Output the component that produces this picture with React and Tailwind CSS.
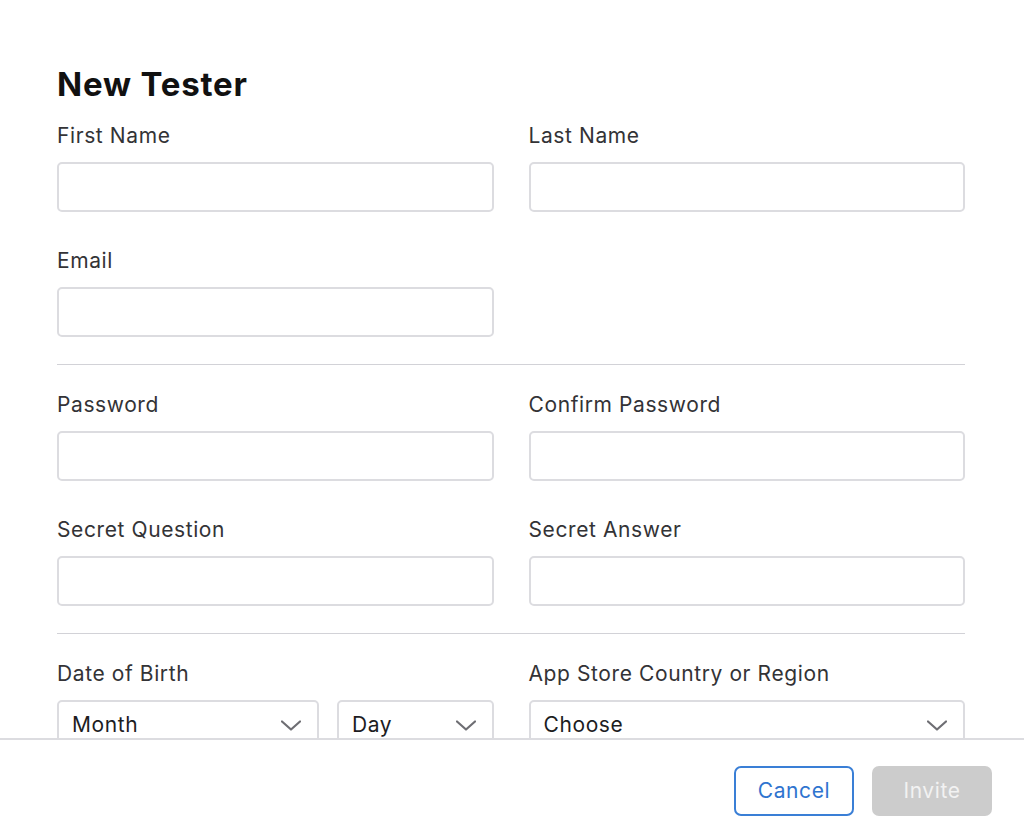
import { useState } from 'react';

const font = { fontFamily: 'Inter, "Noto Sans", sans-serif' };

function Chevron() {
  return (
    <svg width="20" height="11" viewBox="0 0 20 11" fill="none" className="shrink-0">
      <path d="M1 1.5 L10 9.5 L19 1.5" stroke="#6e6e73" strokeWidth="2.2" strokeLinecap="round" strokeLinejoin="round" />
    </svg>
  );
}

function Label({ children }) {
  return <span className="pt-[2px] text-[21px] leading-6 tracking-[0.6px] text-[#333336]">{children}</span>;
}

function Field({ label, type = 'text' }) {
  const [value, setValue] = useState('');
  return (
    <label className="flex flex-col gap-[14px]">
      <Label>{label}</Label>
      <input
        type={type}
        value={value}
        onChange={e => setValue(e.target.value)}
        className="h-[50px] w-full rounded-[5px] border-2 border-[#dcdce0] bg-white px-4 text-[21px] text-[#1d1d1f] outline-none"
      />
    </label>
  );
}

function Select({ placeholder, className = '' }) {
  return (
    <div className={`flex h-[50px] items-center justify-between rounded-[5px] border-2 border-[#dcdce0] bg-white pl-[13px] pr-4 ${className}`}>
      <span className="text-[21px] tracking-[0.6px] text-[#1d1d1f]">{placeholder}</span>
      <Chevron />
    </div>
  );
}

export default function App() {
  return (
    <div style={font} className="flex h-[837px] w-[1024px] flex-col overflow-hidden bg-white">
      <div className="h-[738px] shrink-0 overflow-hidden pl-[57px] pr-[59px] pt-16">
        <h1 className="text-[33px] font-bold leading-10 tracking-[0.8px] text-[#111111]">New Tester</h1>

        <div className="mt-[18px] grid grid-cols-2 gap-x-[35px] gap-y-[35px]">
          <Field label="First Name" />
          <Field label="Last Name" />
          <Field label="Email" type="email" />
        </div>

        <div className="mb-[26px] mt-[27px] h-px bg-[#d2d2d7]" />

        <div className="grid grid-cols-2 gap-x-[35px] gap-y-[35px]">
          <Field label="Password" type="password" />
          <Field label="Confirm Password" type="password" />
          <Field label="Secret Question" />
          <Field label="Secret Answer" />
        </div>

        <div className="mb-[26px] mt-[27px] h-px bg-[#d2d2d7]" />

        <div className="grid grid-cols-2 gap-x-[35px]">
          <div className="flex flex-col gap-[14px]">
            <Label>Date of Birth</Label>
            <div className="flex gap-[18px]">
              <Select placeholder="Month" className="w-[262px]" />
              <Select placeholder="Day" className="flex-1" />
            </div>
          </div>
          <div className="flex flex-col gap-[14px]">
            <Label>App Store Country or Region</Label>
            <Select placeholder="Choose" />
          </div>
        </div>
      </div>

      {/* Footer */}
      <div className="flex flex-1 items-start justify-end gap-[18px] border-t-2 border-[#dcdce0] pr-8 pt-[26px]">
        <button className="h-[50px] w-[120px] rounded-[7px] border-2 border-[#3a7fd6] bg-white text-[21px] tracking-[0.6px] text-[#2f74cf]">
          Cancel
        </button>
        <button disabled className="h-[50px] w-[120px] rounded-[7px] bg-[#cccccc] text-[21px] tracking-[0.6px] text-[#f2f2f2]">
          Invite
        </button>
      </div>
    </div>
  );
}
